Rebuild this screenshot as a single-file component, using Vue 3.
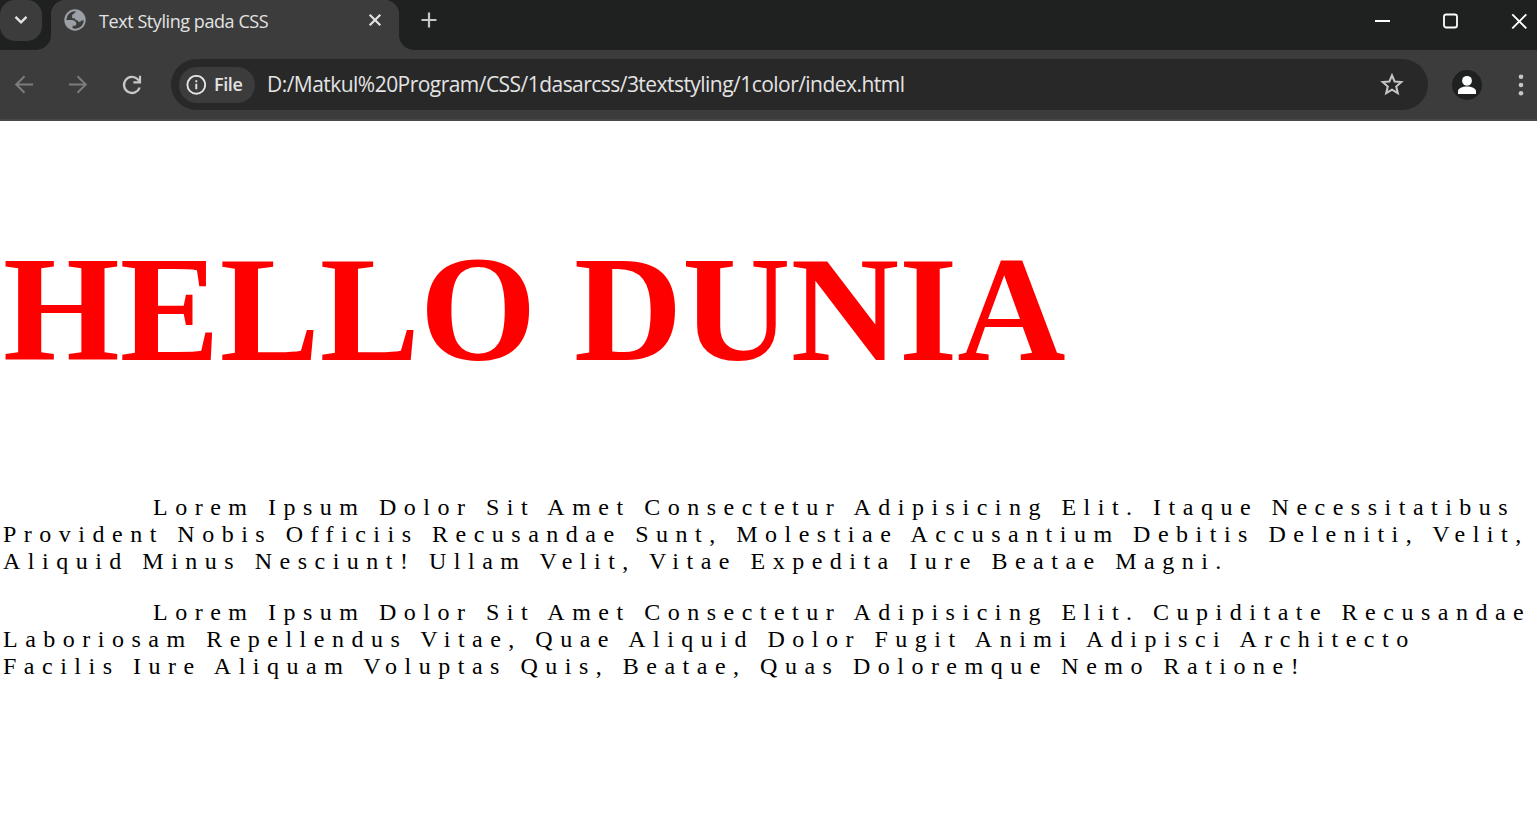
<script setup>
const paragraphs = [
  [
    'Lorem Ipsum Dolor Sit Amet Consectetur Adipisicing Elit. Itaque Necessitatibus',
    'Provident Nobis Officiis Recusandae Sunt, Molestiae Accusantium Debitis Deleniti, Velit,',
    'Aliquid Minus Nesciunt! Ullam Velit, Vitae Expedita Iure Beatae Magni.',
  ],
  [
    'Lorem Ipsum Dolor Sit Amet Consectetur Adipisicing Elit. Cupiditate Recusandae',
    'Laboriosam Repellendus Vitae, Quae Aliquid Dolor Fugit Animi Adipisci Architecto',
    'Facilis Iure Aliquam Voluptas Quis, Beatae, Quas Doloremque Nemo Ratione!',
  ],
]
</script>

<template>
  <div class="window">
    <header class="tabstrip">
      <div class="search-cell">
        <button class="tab-search" aria-label="Search tabs">
          <svg width="42" height="41" viewBox="0 0 42 41"><path d="M15.500 16.800 21 22.300l5.500-5.500" fill="none" stroke="#e3e3e3" stroke-width="2.400" /></svg>
        </button>
      </div>
      <div class="tab">
        <svg class="globe" width="22" height="22" viewBox="0 0 22 22">
          <circle cx="11" cy="11" r="10.700" fill="#9aa0a6" />
          <path d="M12.200 2.300C10.800 3 10.600 4.800 9 5.200c-1.300.4-.6 2.200-.9 3.200.2 1 1.700.8 2.600.8.700 1 .7 1.900 2 2.100 1.300.2 1.600.8 1.700 1.700 1.400.2 2.500-.3 3.100-1.400l2.300-.3a8.700 8.700 0 0 1-11.200 8v-2.600h2.200c1.100 0 1.600-1 1.500-2.200-.1-2.200-2.200-3.500-4.600-3.500H2.300a8.700 8.700 0 0 1 9.900-8.700z" fill="#3c3c3c" />
        </svg>
        <span class="title">Text Styling pada CSS</span>
        <svg class="tab-close" width="14" height="14" viewBox="0 0 14 14"><path d="m1.700 1.700 10.600 10.600m0-10.600L1.700 12.300" stroke="#e3e3e3" stroke-width="2.200" /></svg>
      </div>
      <div class="strip-rest">
        <svg class="plus" width="16" height="16" viewBox="0 0 16 16"><path d="M8 .5v15M.5 8h15" stroke="#c7c7c7" stroke-width="2.200" /></svg>
        <div class="controls">
          <svg width="16" height="16" viewBox="0 0 16 16"><path d="M0 8h15" stroke="#fff" stroke-width="2" /></svg>
          <svg width="16" height="16" viewBox="0 0 16 16"><rect x="1" y="1.500" width="13" height="13" rx="2.300" fill="none" stroke="#fff" stroke-width="1.800" /></svg>
          <svg width="16" height="16" viewBox="0 0 16 16"><path d="m1.300 1.300 14 14M15.300 1.300l-14 14" stroke="#fff" stroke-width="1.900" /></svg>
        </div>
      </div>
    </header>

    <nav class="toolbar">
      <svg class="nav-icon" width="20" height="20" viewBox="0 0 20 20"><path d="M19 9.500H2.500M10.500 1.200 2.200 9.500l8.300 8.300" fill="none" stroke="#7c7c7c" stroke-width="2" /></svg>
      <svg class="nav-icon forward" width="20" height="20" viewBox="0 0 20 20"><path d="M1 9.500h16.500M9.500 1.200l8.300 8.300-8.300 8.300" fill="none" stroke="#7c7c7c" stroke-width="2" /></svg>
      <svg class="nav-icon reload" width="20" height="20" viewBox="0 0 20 20">
        <path d="M17.600 12.500A8 8 0 1 1 15.700 4.300L18 6.700" fill="none" stroke="#c7c7c7" stroke-width="2.300" />
        <path d="M18 .8v6.600h-6.600" fill="none" stroke="#c7c7c7" stroke-width="2.200" />
      </svg>
      <div class="omnibox">
        <div class="chip">
          <svg width="20" height="20" viewBox="0 0 20 20"><circle cx="10.300" cy="9.800" r="8.900" fill="none" stroke="#e3e3e3" stroke-width="1.900" /><path d="M10.300 8.700v5.500M10.300 5.300v2" stroke="#e3e3e3" stroke-width="1.900" /></svg>
          <span class="chip-text">File</span>
        </div>
        <span class="url">D:/Matkul%20Program/CSS/1dasarcss/3textstyling/1color/index.html</span>
        <svg class="star" width="24" height="23" viewBox="0 0 24 23"><path d="m12 2.300 2.600 6.200 6.700.6-5.100 4.400 1.600 6.600-5.800-3.500-5.800 3.500 1.600-6.600-5.100-4.400 6.700-.6z" fill="none" stroke="#c7c7c7" stroke-width="2" /></svg>
      </div>
      <div class="avatar">
        <svg width="30" height="30" viewBox="0 0 30 30"><circle cx="15" cy="10.800" r="4.900" fill="#fff" /><path d="M6 24v-2.500c0-3.300 4.500-4.900 9-4.900s9 1.600 9 4.900V24z" fill="#fff" /></svg>
      </div>
      <svg class="menu" width="6" height="22" viewBox="0 0 6 22"><g fill="#c7c7c7"><circle cx="3" cy="2.700" r="2.300" /><circle cx="3" cy="11" r="2.300" /><circle cx="3" cy="19.300" r="2.300" /></g></svg>
    </nav>

    <main class="page">
      <h1>HELLO DUNIA</h1>
      <p v-for="(lines, i) in paragraphs" :key="i">
        <span v-for="line in lines" :key="line" class="line">{{ line }}</span>
      </p>
    </main>
  </div>
</template>

<style>
body {
  margin: 0;
  background: #fff;
}
</style>

<style scoped>
.window {
  width: 1537px;
  height: 818px;
  overflow: hidden;
  background: #fff;
  font-family: "Open Sans", "Noto Sans", sans-serif;
}
svg {
  display: block;
  flex: none;
}
.tabstrip {
  display: flex;
  height: 50px;
  background: #3c3c3c;
}
.search-cell {
  width: 51px;
  height: 50px;
  background: #1f2120;
  border-bottom-right-radius: 15px;
}
.tab-search {
  display: block;
  width: 42px;
  height: 41px;
  padding: 0;
  border: 0;
  border-radius: 15px;
  background: #3c3c3c;
}
.tab {
  display: flex;
  width: 348px;
  height: 50px;
  box-sizing: border-box;
  padding: 0 17px 10px 13px;
  align-items: center;
  color: #e3e3e3;
  background: radial-gradient(circle at 15px 15px, #3c3c3c 15px, #1f2120 15.500px) 0 0 / 15px 15px no-repeat,
    radial-gradient(circle at 0 15px, #3c3c3c 15px, #1f2120 15.500px) 100% 0 / 15px 15px no-repeat;
}
.title {
  margin: 1px 0 0 13px;
  font-size: 18px;
  line-height: 26px;
  letter-spacing: -0.430px;
  white-space: nowrap;
}
.tab-close {
  margin-left: auto;
}
.strip-rest {
  display: flex;
  flex: 1;
  height: 50px;
  background: #1f2120;
  border-bottom-left-radius: 15px;
}
.plus {
  margin: 12px 0 0 22px;
}
.controls {
  display: flex;
  gap: 52px;
  margin: 13px 10px 0 auto;
}
.toolbar {
  display: flex;
  height: 71px;
  box-sizing: border-box;
  align-items: center;
  padding: 0 13px 0 14px;
  border-bottom: 2px solid #484848;
  background: #3c3c3c;
}
.forward {
  margin-left: 34px;
}
.reload {
  margin-left: 34px;
}
.omnibox {
  display: flex;
  width: 1257px;
  height: 51px;
  box-sizing: border-box;
  margin-left: 29px;
  padding: 0 24px 0 8px;
  align-items: center;
  border-radius: 26px;
  background: #282828;
}
.chip {
  display: flex;
  width: 76px;
  height: 36px;
  box-sizing: border-box;
  padding-left: 7px;
  align-items: center;
  border-radius: 18px;
  background: #3c3c3c;
}
.chip-text {
  margin-left: 8px;
  padding-bottom: 2px;
  color: #e3e3e3;
  font-size: 18px;
  font-weight: 600;
  letter-spacing: -0.4px;
}
.url {
  margin-left: 12px;
  padding-bottom: 2px;
  color: #e3e3e3;
  font-size: 21px;
  letter-spacing: -0.540px;
  white-space: nowrap;
}
.star {
  margin-left: auto;
}
.avatar {
  margin-left: 24px;
  border-radius: 50%;
  background: #1f2120;
}
.menu {
  margin-left: auto;
}
.page {
  padding: 1px 3px;
  color: #000;
  font-family: "Liberation Serif", "Times New Roman", serif;
}
h1 {
  margin: 103px 0 101px;
  color: #f00;
  font-size: 150px;
  font-weight: 700;
  line-height: 168px;
  white-space: nowrap;
}
p {
  margin: 0 0 24px;
  font-size: 24px;
  line-height: 27px;
  letter-spacing: 7.500px;
  text-indent: 150px;
}
.line {
  display: block;
  white-space: nowrap;
}
.line + .line {
  text-indent: 0;
}
</style>
